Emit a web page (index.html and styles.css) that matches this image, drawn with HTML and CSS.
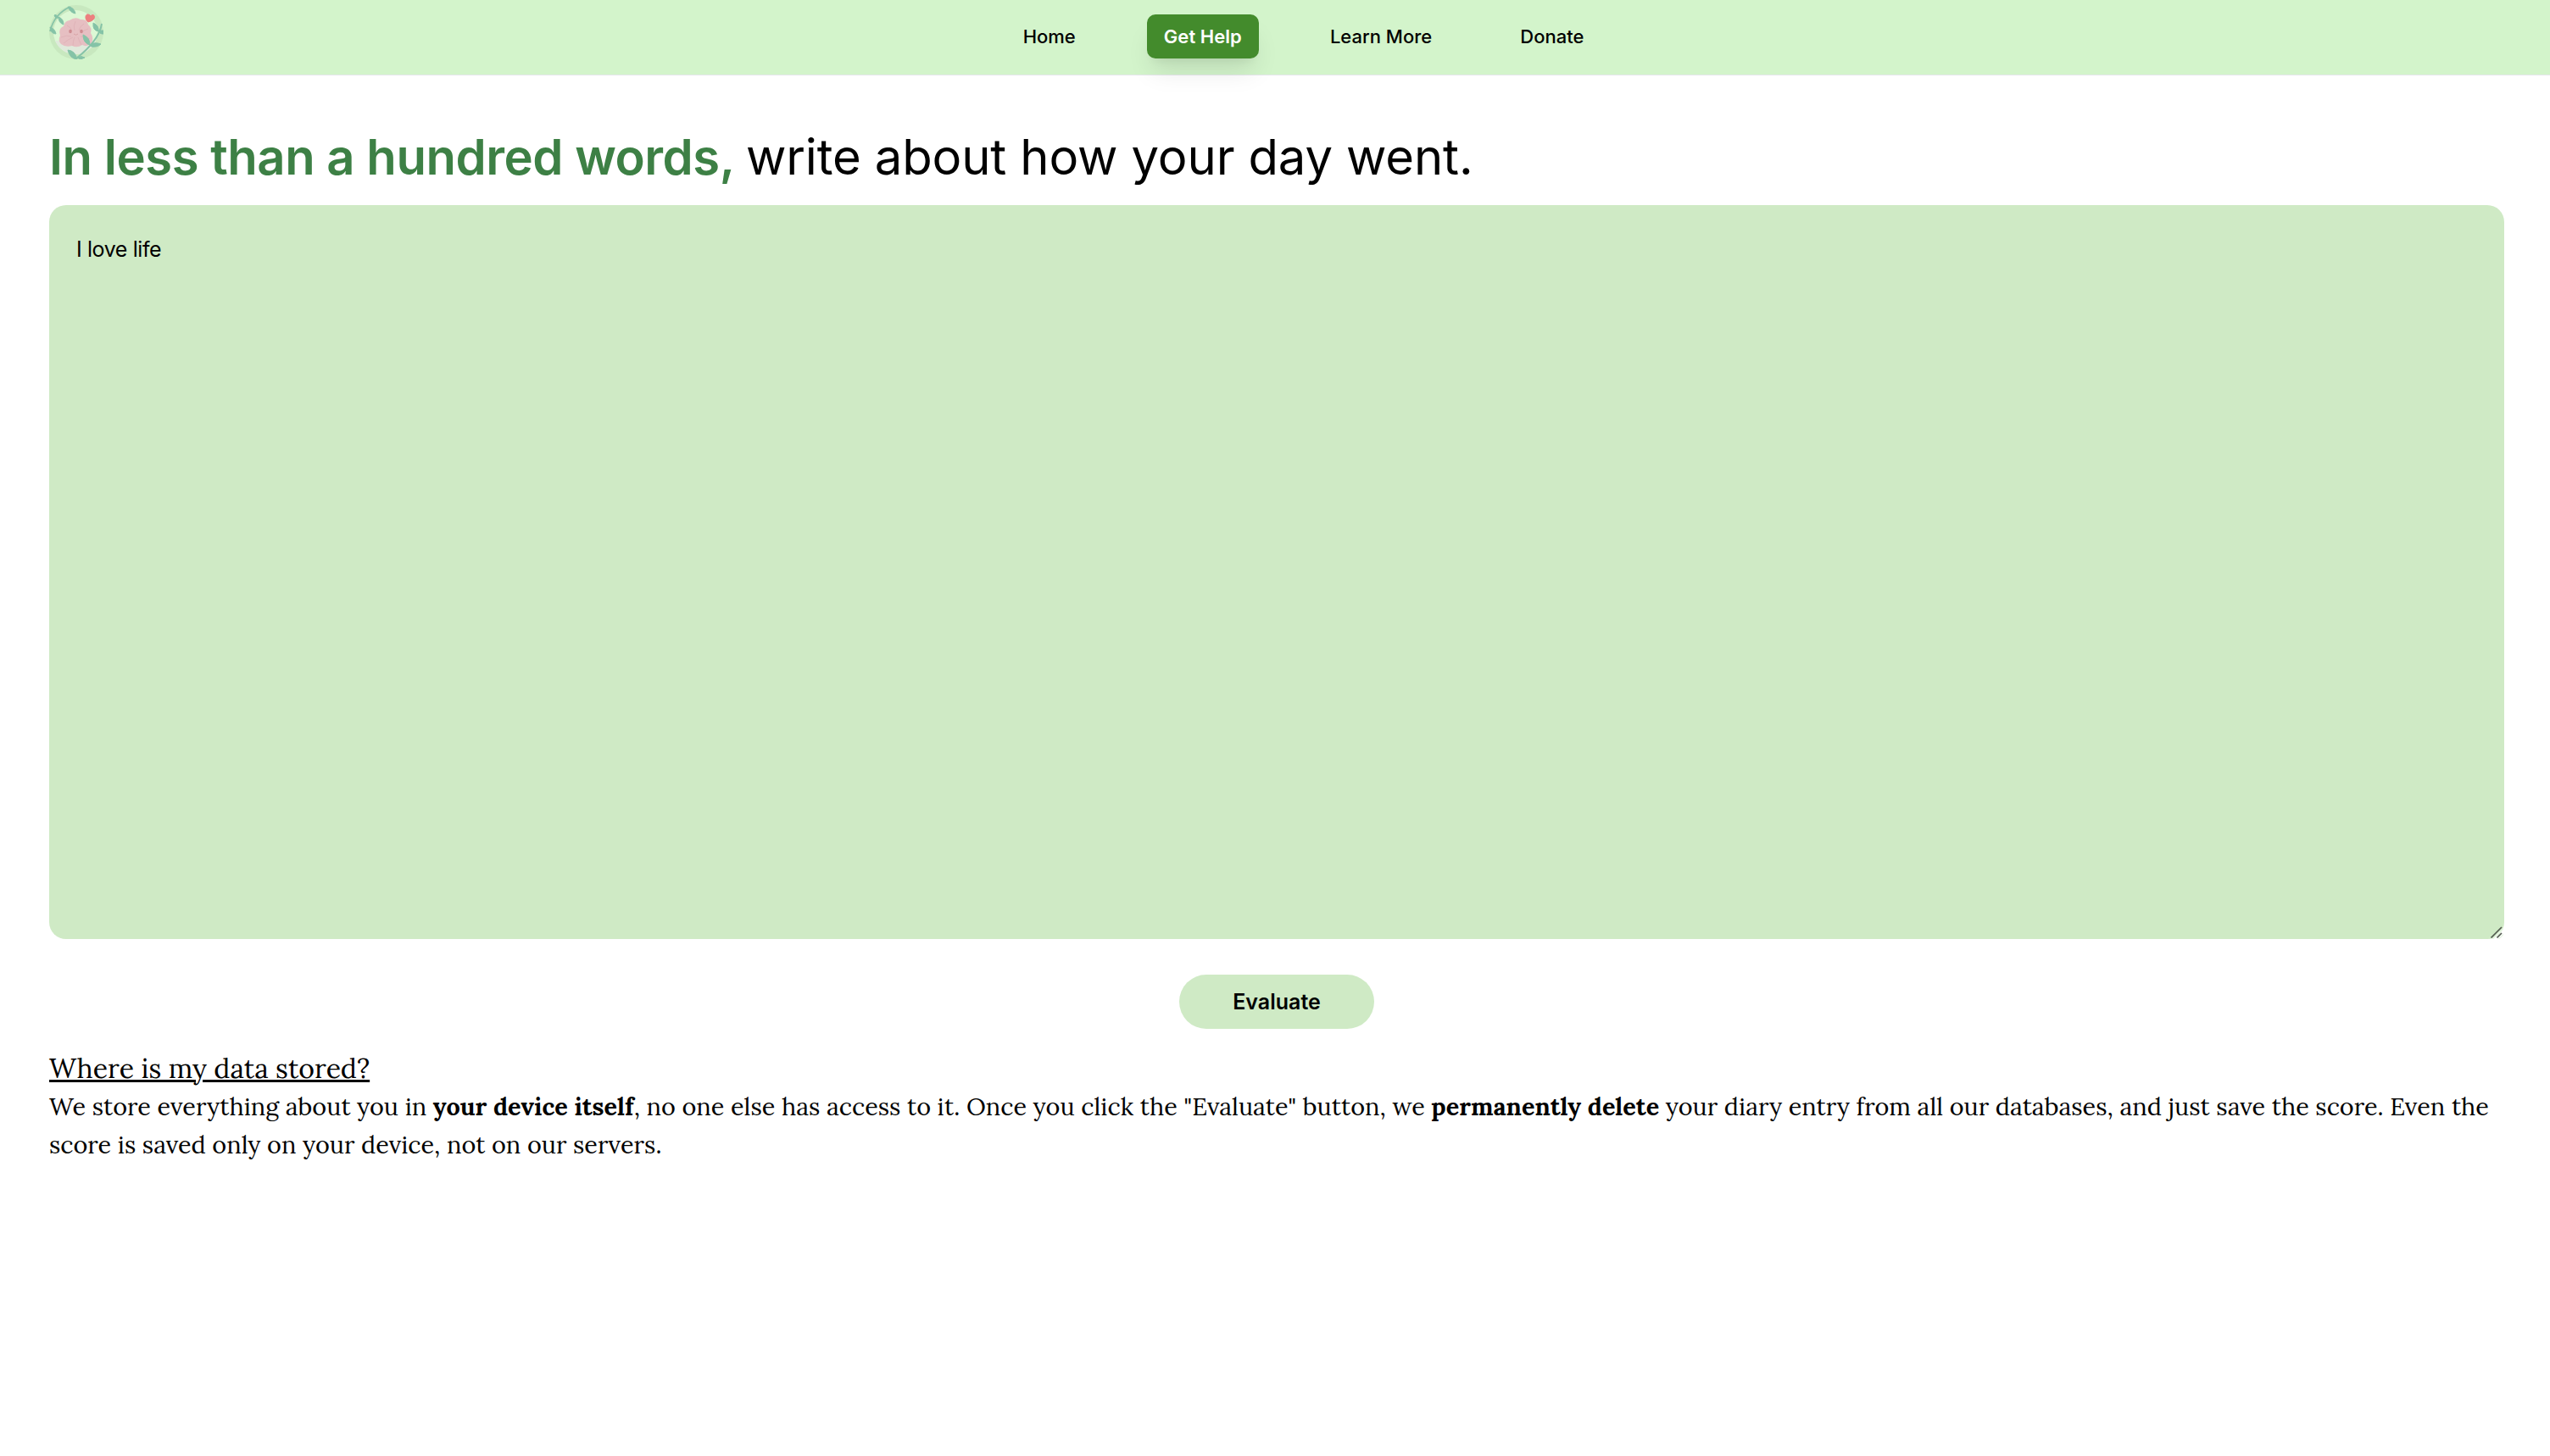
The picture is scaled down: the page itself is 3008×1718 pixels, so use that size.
FILE: index.html
```
<!DOCTYPE html>
<html lang="en">
<head>
<meta charset="utf-8">
<title>Get Help</title>
<link rel="stylesheet" href="styles.css">
</head>
<body>
<header class="topbar">
  <a class="logo" href="#" aria-label="Home page">
    <svg viewBox="0 0 64 64" width="64" height="64">
      <circle cx="32" cy="32" r="32" fill="#c8e8bf"/>
      <circle cx="31" cy="32" r="26" fill="#dcf8d5"/>
      <path d="M7 42a26 26 0 0 0 48 0z" fill="#dfeadb"/>
      <path d="M24 18q7-5 13-1q8-1 9 6q5 4 3 10q4 6 1 12q-5 5-11 2q-6 4-12 1q-8 2-13-2q-4-4-1-10q-3-8 4-11q1-6 7-7z" fill="#e6bfc2"/>
      <path d="M31 19q-3 6-1 11M21 24q5 2 6 7M41 22q-5 3-6 8M14 38q7-3 12-1M17 45q6-5 11-7M28 48q0-6 2-10M38 47q-3-6-4-9M48 40q-6-3-11-3M46 28q-5 1-8 5" fill="none" stroke="#dcadb3" stroke-width=".7"/>
      <ellipse cx="25" cy="31" rx="1.8" ry="2.3" fill="#cf8d92"/>
      <ellipse cx="38" cy="31" rx="1.8" ry="2.3" fill="#cf8d92"/>
      <path d="M29 34q2.500 2.500 5 0" fill="none" stroke="#d49a9f" stroke-width=".8"/>
      <path d="M1 31C4 19 11 8 25 2" fill="none" stroke="#85c3a7" stroke-width="1.700"/>
      <path d="M22 2q7 0 9 8q-6-1-9-8zM11 14q6 2 6 9q-6-2-6-9zM6 12q2-2 5 3q-4 1-5-3zM1 26q6 2 7 8q-6 0-7-8zM22 53q9 1 11 11q-9-1-11-11zM40 35q8 3 8 12q-8-2-8-12zM52 21q7 3 6 10q-7-1-6-10zM48 47q5-4 13-1q-4 4-11 3zM58 30h6v4q-4 1-6-4zM33 62q5-3 9 0l-5 2z" fill="#85c3a7" stroke="#85c3a7"/>
      <path d="M33 62C46 52 60 37 62 22" fill="none" stroke="#85c3a7" stroke-width="1.900"/>
      <path d="M46 20c-5-4-3-10 0-9q2 0 3 2c2-3 6-1 4 3q-2 3-7 4z" fill="#ed7f7f" stroke="#ed7f7f"/>
    </svg>
  </a>
  <nav class="nav">
    <a class="nav-link" href="#">Home</a>
    <a class="nav-link active" href="#">Get Help</a>
    <a class="nav-link" href="#">Learn More</a>
    <a class="nav-link" href="#">Donate</a>
  </nav>
</header>
<main class="content">
  <h1 class="prompt"><span class="limit">In less than a hundred words,</span> write about how your day went.</h1>
  <div class="entry-box">
    <textarea class="entry" spellcheck="false">I love life</textarea>
    <svg class="grip" viewBox="0 0 16 16" width="16" height="16"><path d="M3 16.500L16 3.500M10 16.500L16 10.500" stroke="#e9f5e5" stroke-width="1.500"/><path d="M1.500 14.500L14 2M8.500 14.500L14 9" stroke="#52594f" stroke-width="1.700"/></svg>
  </div>
  <button class="evaluate">Evaluate</button>
  <section class="privacy">
    <h2 class="question">Where is my data stored?</h2>
    <p class="answer">We store everything about you in <b>your device itself</b>, no one else has access to it. Once you click the "Evaluate" button, we <b>permanently delete</b> your diary entry from all our databases, and just save the score. Even the score is saved only on your device, not on our servers.</p>
  </section>
</main>
</body>
</html>
```
FILE: styles.css
```
* {
  box-sizing: border-box;
}

body {
  margin: 0;
  background: #fff;
  color: #000;
  font-family: Inter, sans-serif;
}

.topbar {
  display: flex;
  height: 89px;
  padding: 6px 58px 0;
  background: #d3f4cb;
  border-bottom: 1px solid #e5e7eb;
}

.logo {
  flex: none;
  width: 64px;
  height: 64px;
}

.logo svg {
  display: block;
}

.nav {
  display: flex;
  flex: 1;
  justify-content: center;
  align-items: flex-start;
  gap: 64px;
  padding: 11px 0 0 3px;
}

.nav-link {
  height: 52px;
  padding: 0 20px;
  border-radius: 10px;
  color: #000;
  font-size: 22px;
  font-weight: 500;
  line-height: 52px;
  text-decoration: none;
}

.nav-link.active {
  background: #438b2c;
  color: #fff;
  font-weight: 600;
  letter-spacing: 0.05px;
  box-shadow: 0 20px 30px -6px rgba(0, 0, 0, 0.1), 0 8px 12px -8px rgba(0, 0, 0, 0.1);
}

.content {
  display: flex;
  flex-direction: column;
  padding: 53px 54px 0 58px;
}

.prompt {
  margin: 0;
  font-size: 58px;
  font-weight: 400;
  letter-spacing: -0.15px;
  line-height: 86px;
}

.limit {
  margin-right: -3px;
  color: #3d8045;
  font-weight: 600;
  letter-spacing: -0.47px;
}

.entry-box {
  position: relative;
  height: 866px;
  margin-top: 14px;
}

.entry {
  display: block;
  width: 100%;
  height: 100%;
  padding: 32px;
  border: 0;
  border-radius: 20px;
  outline: 0;
  resize: none;
  background: #cfeac5;
  color: #000;
  font: 400 25px/40px Inter, sans-serif;
  letter-spacing: -0.4px;
}

.grip {
  position: absolute;
  right: 1px;
  bottom: 0;
}

.evaluate {
  align-self: center;
  width: 230px;
  height: 64px;
  margin-top: 42px;
  border: 0;
  border-radius: 32px;
  background: #cfeac5;
  color: #000;
  font: 600 25px Inter, sans-serif;
}

.privacy {
  margin-top: 24px;
  font-family: Lora, "Liberation Serif", serif;
}

.question {
  margin: 0;
  font-size: 32px;
  font-weight: 400;
  line-height: 45px;
  text-decoration: underline;
  text-decoration-thickness: 3px;
}

.answer {
  margin: 0;
  font-size: 28.8px;
  line-height: 45px;
}
```
